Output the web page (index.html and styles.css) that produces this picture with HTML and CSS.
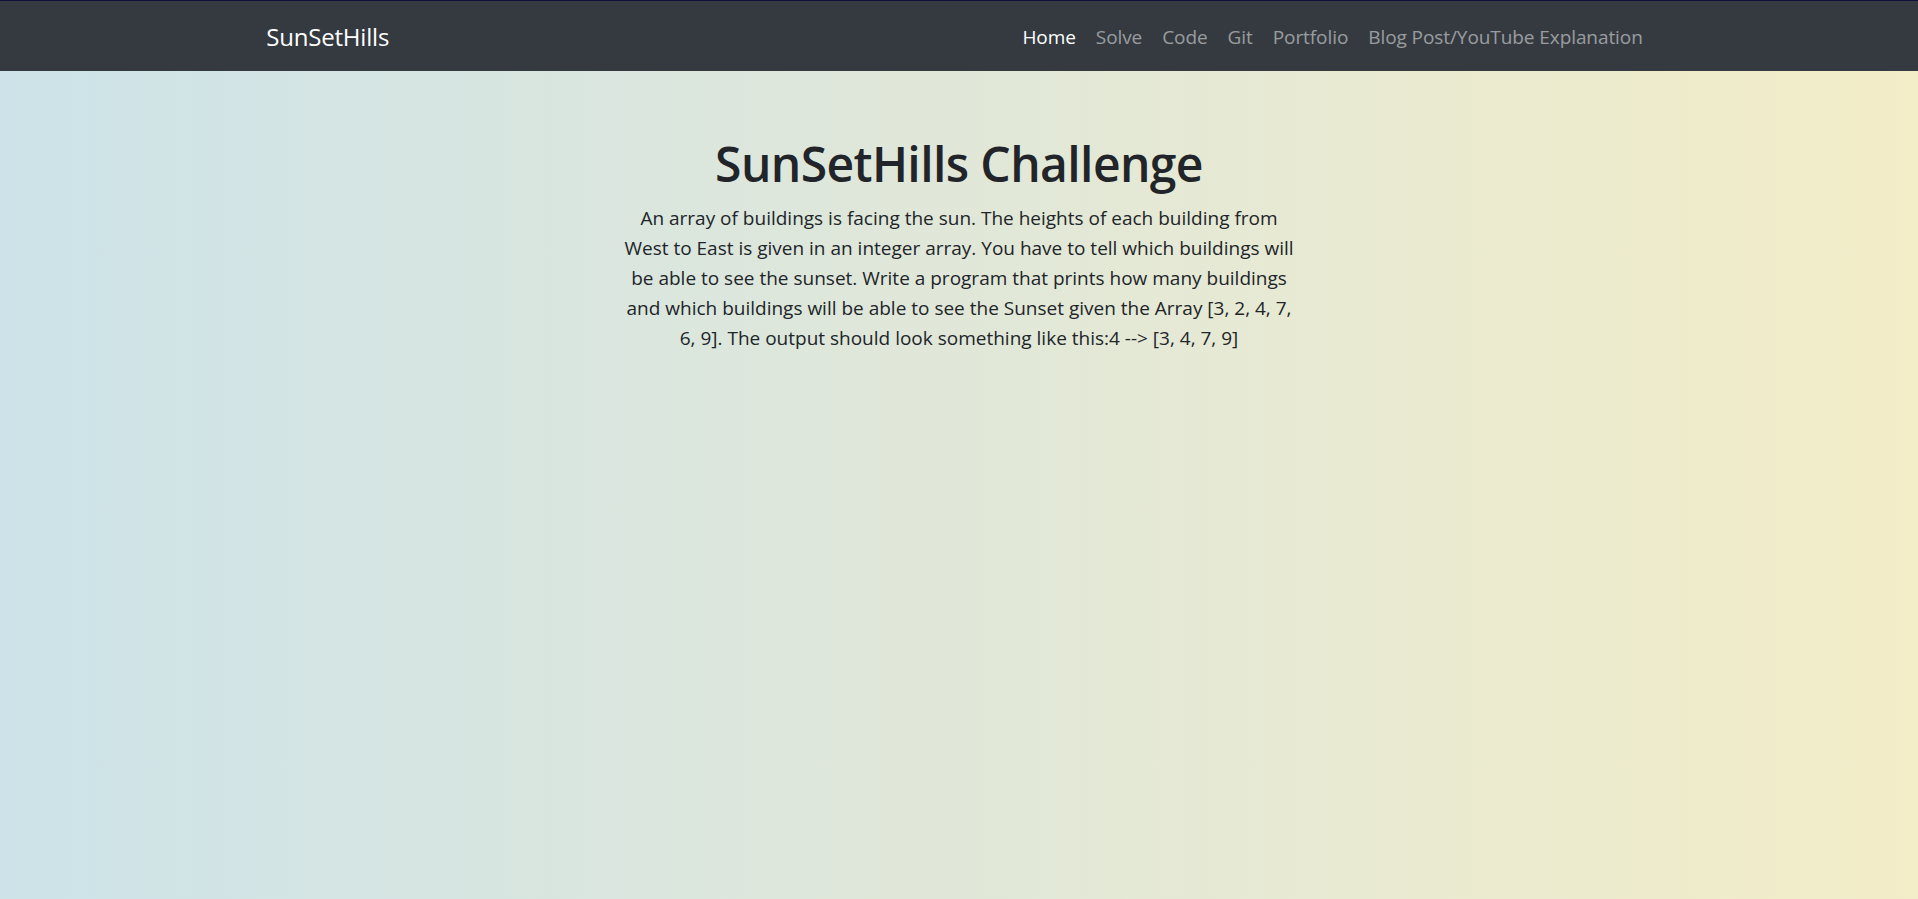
FILE: index.html
```html
<!DOCTYPE html>
<html lang="en">
<head>
<meta charset="utf-8">
<title>SunSetHills</title>
<link rel="stylesheet" href="styles.css">
</head>
<body>
<nav class="navbar">
  <div class="nav-container">
    <a class="brand" href="#">SunSetHills</a>
    <ul class="nav-links">
      <li><a class="nav-link active" href="#">Home</a></li>
      <li><a class="nav-link" href="#">Solve</a></li>
      <li><a class="nav-link" href="#">Code</a></li>
      <li><a class="nav-link" href="#">Git</a></li>
      <li><a class="nav-link" href="#">Portfolio</a></li>
      <li><a class="nav-link" href="#">Blog Post/YouTube Explanation</a></li>
    </ul>
  </div>
</nav>
<main class="content">
  <h1 class="title">SunSetHills Challenge</h1>
  <p class="lead-text">An array of buildings is facing the sun. The heights of each building from West to East is given in an integer array. You have to tell which buildings will be able to see the sunset. Write a program that prints how many buildings and which buildings will be able to see the Sunset given the Array [3, 2, 4, 7, 6, 9]. The output should look something like this:4 --&gt; [3, 4, 7, 9]</p>
</main>
</body>
</html>
```

FILE: styles.css
```css
* { box-sizing: border-box; }
html, body { height: 100%; }
body {
  margin: 0;
  font-family: "Open Sans", "Noto Sans", sans-serif;
  color: #212529;
  background: linear-gradient(to right, #cde3e9 0%, #dfe7da 45%, #f3edc8 100%);
  display: flex;
  flex-direction: column;
}
.navbar {
  background: #343a40;
  border-top: 1px solid #12103a;
  height: 71px;
  flex: none;
}
.nav-container {
  width: 1425px;
  margin: 0 auto;
  height: 100%;
  padding: 1px 18.75px 0;
  display: flex;
  align-items: center;
  justify-content: space-between;
}
.brand {
  color: #fff;
  text-decoration: none;
  font-size: 24px;
  letter-spacing: -0.2px;
  padding-left: 1px;
}
.nav-links {
  list-style: none;
  margin: 0;
  padding: 0;
  display: flex;
}
.nav-link {
  display: block;
  padding: 0 10px;
  font-size: 19px;
  letter-spacing: -0.08px;
  color: rgba(255, 255, 255, 0.5);
  text-decoration: none;
}
.nav-link.active { color: #fff; }
.content {
  flex: 1;
  display: flex;
  flex-direction: column;
  align-items: center;
  padding-top: 64px;
}
.title {
  margin: 0 0 10px;
  font-size: 48px;
  font-weight: 600;
  line-height: 1.2;
  letter-spacing: -0.6px;
}
.lead-text {
  margin: 0;
  width: 675px;
  text-align: center;
  font-size: 19px;
  line-height: 30px;
}
```
